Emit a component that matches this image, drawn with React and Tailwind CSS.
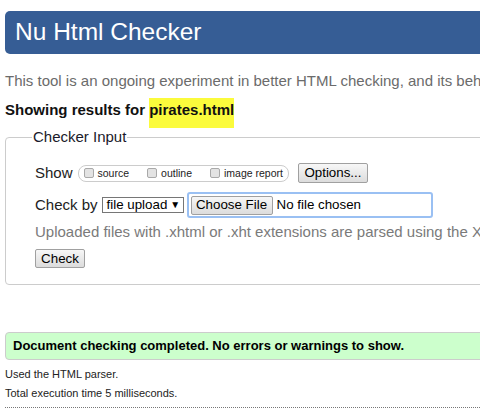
import React from 'react';

const SHOW_OPTIONS = ['source', 'outline', 'image report'];

function FakeCheckbox({ label, last }) {
  return (
    <span className="flex items-center">
      <span className="w-[10px] h-[10px] rounded-[2px] border border-[#a9a9a9] bg-[#e3e3e3]" />
      <span className={`ml-[4px] text-[10.5px] leading-none text-[#222] ${last ? '' : 'mr-[18px]'}`}>
        {label}
      </span>
    </span>
  );
}

export default function App() {
  const control = "font-['Liberation_Sans',Arial,sans-serif] text-[13.33px] leading-none text-black";
  const btn =
    'border border-[#a0a0a0] rounded-[2px] bg-gradient-to-b from-[#f7f7f7] to-[#dcdcdc] flex items-center justify-center';

  return (
    <div className="w-[480px] h-[416px] overflow-hidden bg-white pl-[5px] pt-[11px] font-['Liberation_Sans',Arial,sans-serif] text-[#222]">
      {/* Title bar */}
      <div className="h-[43px] w-[600px] rounded-l-[5px] bg-[#365d95] flex items-center pl-[10px]">
        <h1 className="text-[24.5px] text-white leading-none">Nu Html Checker</h1>
      </div>

      <p className="mt-[17px] text-[15px] leading-[20px] text-[#6b6b6b] whitespace-nowrap">
        This tool is an ongoing experiment in better HTML checking, and its behavior remains subject to change
      </p>

      <div className="mt-[9px] flex items-start text-[15px] leading-[20px] font-bold text-[#111] whitespace-nowrap">
        <span>Showing results for&nbsp;</span>
        <span className="bg-[#fbfb3c] mt-[-2px] pt-[2px] pb-[8px] mb-[-8px]">pirates.html</span>
      </div>

      {/* Checker input */}
      <fieldset className="mt-[8px] w-[600px] border border-[#cccccc] rounded-[4px] pl-[29px] pb-[16px]">
        <legend className="ml-[-3px] px-[1px] text-[15px] leading-[18px] text-[#1a1a2a]">Checker Input</legend>

        <div className="mt-[17px] h-[20px] flex items-center text-[15px]">
          <span>Show</span>
          <div className="ml-[5px] h-[17px] flex items-center border border-[#cccccc] rounded-[8px] pl-[5px] pr-[5px]">
            {SHOW_OPTIONS.map((o, i) => (
              <FakeCheckbox key={o} label={o} last={i === SHOW_OPTIONS.length - 1} />
            ))}
          </div>
          <button className={`${btn} ${control} ml-[9px] w-[70px] h-[20px]`}>Options...</button>
        </div>

        <div className="mt-[9px] h-[26px] flex items-center text-[15px]">
          <span>Check by</span>
          <span className={`${control} ml-[4px] h-[16px] w-[82px] border border-[#767676] flex items-center pl-[4px]`}>
            file upload <span className="ml-[3px] text-[10px]">▼</span>
          </span>
          <div className="ml-[3px] h-[26px] w-[246px] border-2 border-[#9ac0f3] rounded-[3px] flex items-center pl-[2px]">
            <button className={`${btn} ${control} h-[19px] w-[82px]`}>Choose File</button>
            <span className={`${control} ml-[4px]`}>No file chosen</span>
          </div>
        </div>

        <p className="mt-[4px] text-[15px] leading-[20px] text-[#7a7a7a] whitespace-nowrap">
          Uploaded files with .xhtml or .xht extensions are parsed using the XML parser.
        </p>

        <button className={`${btn} ${control} mt-[7px] h-[19px] w-[50px]`}>Check</button>
      </fieldset>

      {/* Result */}
      <div className="mt-[47px] h-[28px] w-[600px] border border-[#cccccc] rounded-l-[4px] bg-[#ccffcc] flex items-center pl-[7px]">
        <p className="text-[13px] font-bold text-black whitespace-nowrap">
          Document checking completed. No errors or warnings to show.
        </p>
      </div>

      <p className="mt-[7px] text-[11px] leading-[14px] text-[#222]">Used the HTML parser.</p>
      <p className="mt-[5px] text-[11px] leading-[14px] text-[#222]">Total execution time 5 milliseconds.</p>
      <div className="mt-[7px] border-t border-dotted border-[#777]" />
    </div>
  );
}
